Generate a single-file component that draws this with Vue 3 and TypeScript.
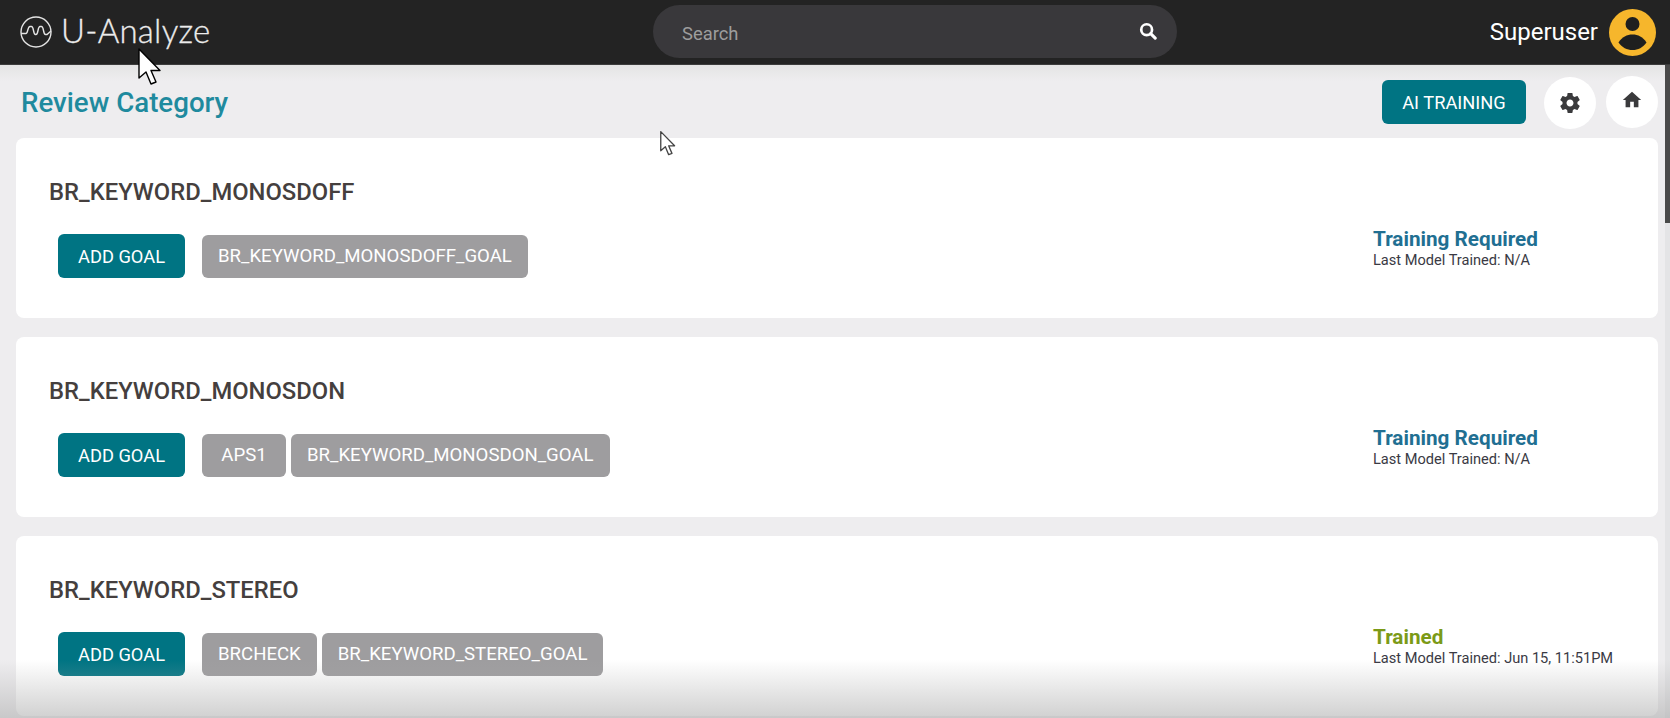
<script setup lang="ts">
interface Category {
  name: string
  goals: string[]
  status: string
  trained: boolean
  lastTrained: string
}

const categories: Category[] = [
  { name: 'BR_KEYWORD_MONOSDOFF', goals: ['BR_KEYWORD_MONOSDOFF_GOAL'], status: 'Training Required', trained: false, lastTrained: 'N/A' },
  { name: 'BR_KEYWORD_MONOSDON', goals: ['APS1', 'BR_KEYWORD_MONOSDON_GOAL'], status: 'Training Required', trained: false, lastTrained: 'N/A' },
  { name: 'BR_KEYWORD_STEREO', goals: ['BRCHECK', 'BR_KEYWORD_STEREO_GOAL'], status: 'Trained', trained: true, lastTrained: 'Jun 15, 11:51PM' },
]
</script>

<template>
  <div class="page">
    <header class="topbar">
      <div class="brand">
        <svg class="logo" viewBox="0 0 32 32" fill="none" stroke="#e4e4e4" stroke-width="1.4">
          <circle cx="16" cy="16" r="15" />
          <path d="M1 17.5H6C8 17.5 7.5 10.5 10 10.5H11.5C14 10.5 13 18.5 15.5 18.5H16C18.5 18.5 17.5 10.5 20 10.5H21.5C24 10.5 23 18.5 25.5 18.5H27L31 15" />
        </svg>
        <span class="brand-name">U-Analyze</span>
      </div>
      <div class="search">
        <span class="search-text">Search</span>
        <svg class="search-icon" viewBox="0 0 20 20" fill="none" stroke="#fff">
          <circle cx="8.5" cy="8.5" r="6" stroke-width="3" />
          <path d="M13 13L18 18" stroke-width="3.4" stroke-linecap="round" />
        </svg>
      </div>
      <div class="user">
        <span class="user-name">Superuser</span>
        <svg class="avatar" viewBox="0 0 47 47">
          <circle cx="23.5" cy="23.5" r="23.5" fill="#f6b62c" />
          <circle cx="23.5" cy="15" r="7" fill="#1f1f1f" />
          <path d="M9.5 33.5C13 28 18 25.5 23.5 25.5C29 25.5 34 28 37.5 33.5C34 38.5 29 41 23.5 41C18 41 13 38.5 9.5 33.5Z" fill="#1f1f1f" />
        </svg>
      </div>
    </header>

    <main class="content">
      <div class="title-row">
        <h1 class="title">Review Category</h1>
        <div class="actions">
          <button class="btn train">AI TRAINING</button>
          <span class="round gear">
            <svg viewBox="0 0 24 24" width="24" height="24" fill="#3a3a3c">
              <path d="M19.43 12.98c.04-.32.07-.64.07-.98s-.03-.66-.07-.98l2.11-1.65c.19-.15.24-.42.12-.64l-2-3.46c-.12-.22-.39-.3-.61-.22l-2.49 1c-.52-.4-1.08-.73-1.69-.98l-.38-2.65C14.46 2.18 14.25 2 14 2h-4c-.25 0-.46.18-.49.42l-.38 2.65c-.61.25-1.17.59-1.69.98l-2.49-1c-.23-.09-.49 0-.61.22l-2 3.46c-.13.22-.07.49.12.64l2.11 1.65c-.04.32-.07.65-.07.98s.03.66.07.98l-2.11 1.65c-.19.15-.24.42-.12.64l2 3.46c.12.22.39.3.61.22l2.49-1c.52.4 1.08.73 1.69.98l.38 2.65c.03.24.24.42.49.42h4c.25 0 .46-.18.49-.42l.38-2.65c.61-.25 1.17-.59 1.69-.98l2.49 1c.23.09.49 0 .61-.22l2-3.46c.12-.22.07-.49-.12-.64l-2.11-1.65zM12 15.5c-1.93 0-3.5-1.57-3.5-3.5s1.57-3.5 3.5-3.5 3.5 1.57 3.5 3.5-1.57 3.5-3.5 3.5z" />
            </svg>
          </span>
          <span class="round home">
            <svg class="home-icon" viewBox="0 0 24 24" width="22" height="22" fill="#3a3a3c">
              <path d="M10 20v-6h4v6h5v-8h3L12 3 2 12h3v8z" />
            </svg>
          </span>
        </div>
      </div>

      <section v-for="cat in categories" :key="cat.name" class="card">
        <div class="card-main">
          <h2 class="card-title">{{ cat.name }}</h2>
          <div class="goals">
            <button class="btn add">ADD GOAL</button>
            <div class="chips">
              <span v-for="goal in cat.goals" :key="goal" class="chip">{{ goal }}</span>
            </div>
          </div>
        </div>
        <div class="status">
          <div class="status-label" :class="{ ok: cat.trained }">{{ cat.status }}</div>
          <div class="status-sub">Last Model Trained: {{ cat.lastTrained }}</div>
        </div>
      </section>
    </main>

    <div class="scrollbar"><div class="thumb"></div></div>
    <div class="fade"></div>

    <svg class="cursor big" viewBox="0 0 24 38">
      <path d="M1 1V30L8 24L13 36L18 34L13 22.5H22Z" fill="#fff" stroke="#000" stroke-width="1.4" stroke-linejoin="round" />
    </svg>
    <svg class="cursor small" viewBox="0 0 24 38">
      <path d="M1 1V30L8 24L13 36L18 34L13 22.5H22Z" fill="#fff" stroke="#444" stroke-width="2" stroke-linejoin="round" />
    </svg>
  </div>
</template>

<style scoped>
.page {
  position: relative;
  width: 1670px;
  height: 718px;
  overflow: hidden;
  background: #eeedef;
  font-family: Roboto, "Liberation Sans", sans-serif;
}
.topbar {
  height: 65px;
  background: #232323;
  display: flex;
  align-items: center;
  padding: 0 14px 0 20px;
  box-sizing: border-box;
  border-bottom: 1px solid #3c3c3c;
}
.brand {
  width: 633px;
  display: flex;
  align-items: center;
  gap: 9px;
}
.logo {
  width: 32px;
  height: 32px;
}
.brand-name {
  font-family: Lato, sans-serif;
  font-weight: 300;
  font-size: 33px;
  line-height: 36px;
  letter-spacing: 0.25px;
  margin-top: -5px;
  -webkit-text-stroke: 0.3px #ececec;
  color: #ececec;
}
.search {
  width: 524px;
  height: 53px;
  margin-top: -1px;
  border-radius: 27px;
  background: #39383b;
  display: flex;
  align-items: center;
  justify-content: space-between;
  padding: 0 20px 0 29px;
  box-sizing: border-box;
}
.search-text {
  font-size: 18.4px;
  margin-top: 3px;
  color: #9d9d9d;
}
.search-icon {
  width: 18px;
  height: 18px;
  margin-top: -1px;
}
.user {
  flex: 1;
  display: flex;
  align-items: center;
  justify-content: flex-end;
  gap: 11px;
}
.user-name {
  font-size: 24px;
  color: #fff;
}
.avatar {
  width: 47px;
  height: 47px;
}
.content {
  padding: 0 12px 0 16px;
  background: linear-gradient(#e4e4e4, #eeedef 16px);
}
.title-row {
  height: 73px;
  display: flex;
  align-items: center;
  justify-content: space-between;
  padding-left: 5px;
}
.title {
  margin: 2px 0 0;
  font-size: 27.7px;
  font-weight: 500;
  color: #1f8a9e;
}
.actions {
  display: flex;
  align-items: center;
  gap: 18px;
}
.btn {
  border: none;
  border-radius: 6px;
  background: #007483;
  color: #fff;
  font-family: inherit;
  font-size: 18.3px;
  height: 44px;
  padding: 0;
}
.train {
  width: 144px;
  margin-top: 1px;
}
.round {
  width: 52px;
  height: 52px;
  border-radius: 50%;
  background: #fff;
  display: flex;
  align-items: center;
  justify-content: center;
}
.gear {
  margin-top: 2px;
}
.home {
  margin-left: -8px;
}
.home-icon {
  margin-top: -4px;
}
.card {
  height: 180px;
  margin-bottom: 19px;
  background: #fff;
  border-radius: 8px;
  display: flex;
  justify-content: space-between;
  box-sizing: border-box;
  padding: 40px 0 0 33px;
}
.card-title {
  margin: 0 0 28px;
  font-size: 23.8px;
  line-height: 28px;
  font-weight: 500;
  color: #453f3e;
}
.goals {
  display: flex;
  align-items: center;
  margin-left: 9px;
}
.add {
  width: 127px;
  margin-right: 17px;
}
.chips {
  display: flex;
  gap: 5px;
}
.chip {
  min-width: 52px;
  height: 43px;
  margin-top: 1px;
  padding: 0 16px;
  border-radius: 6px;
  background: #9e9d9f;
  color: #fff;
  font-size: 18.6px;
  line-height: 43px;
  text-align: center;
}
.status {
  width: 285px;
  padding-top: 49px;
}
.status-label {
  font-size: 20.7px;
  line-height: 24px;
  font-weight: 700;
  color: #216f92;
}
.status-label.ok {
  color: #7b9a17;
}
.status-sub {
  font-size: 14.6px;
  line-height: 19px;
  color: #3a3a44;
}
.scrollbar {
  position: absolute;
  top: 65px;
  right: 0;
  width: 5px;
  bottom: 0;
  background: #e4e4e6;
}
.thumb {
  height: 158px;
  background: #4a4a4a;
}
.fade {
  position: absolute;
  left: 0;
  right: 0;
  bottom: 0;
  height: 58px;
  background: linear-gradient(rgba(170, 170, 170, 0), rgba(170, 170, 170, 0.55));
  pointer-events: none;
}
.cursor {
  position: absolute;
}
.big {
  left: 138px;
  top: 48px;
  width: 24px;
  height: 38px;
}
.small {
  left: 660px;
  top: 131px;
  width: 16px;
  height: 25px;
}
</style>
